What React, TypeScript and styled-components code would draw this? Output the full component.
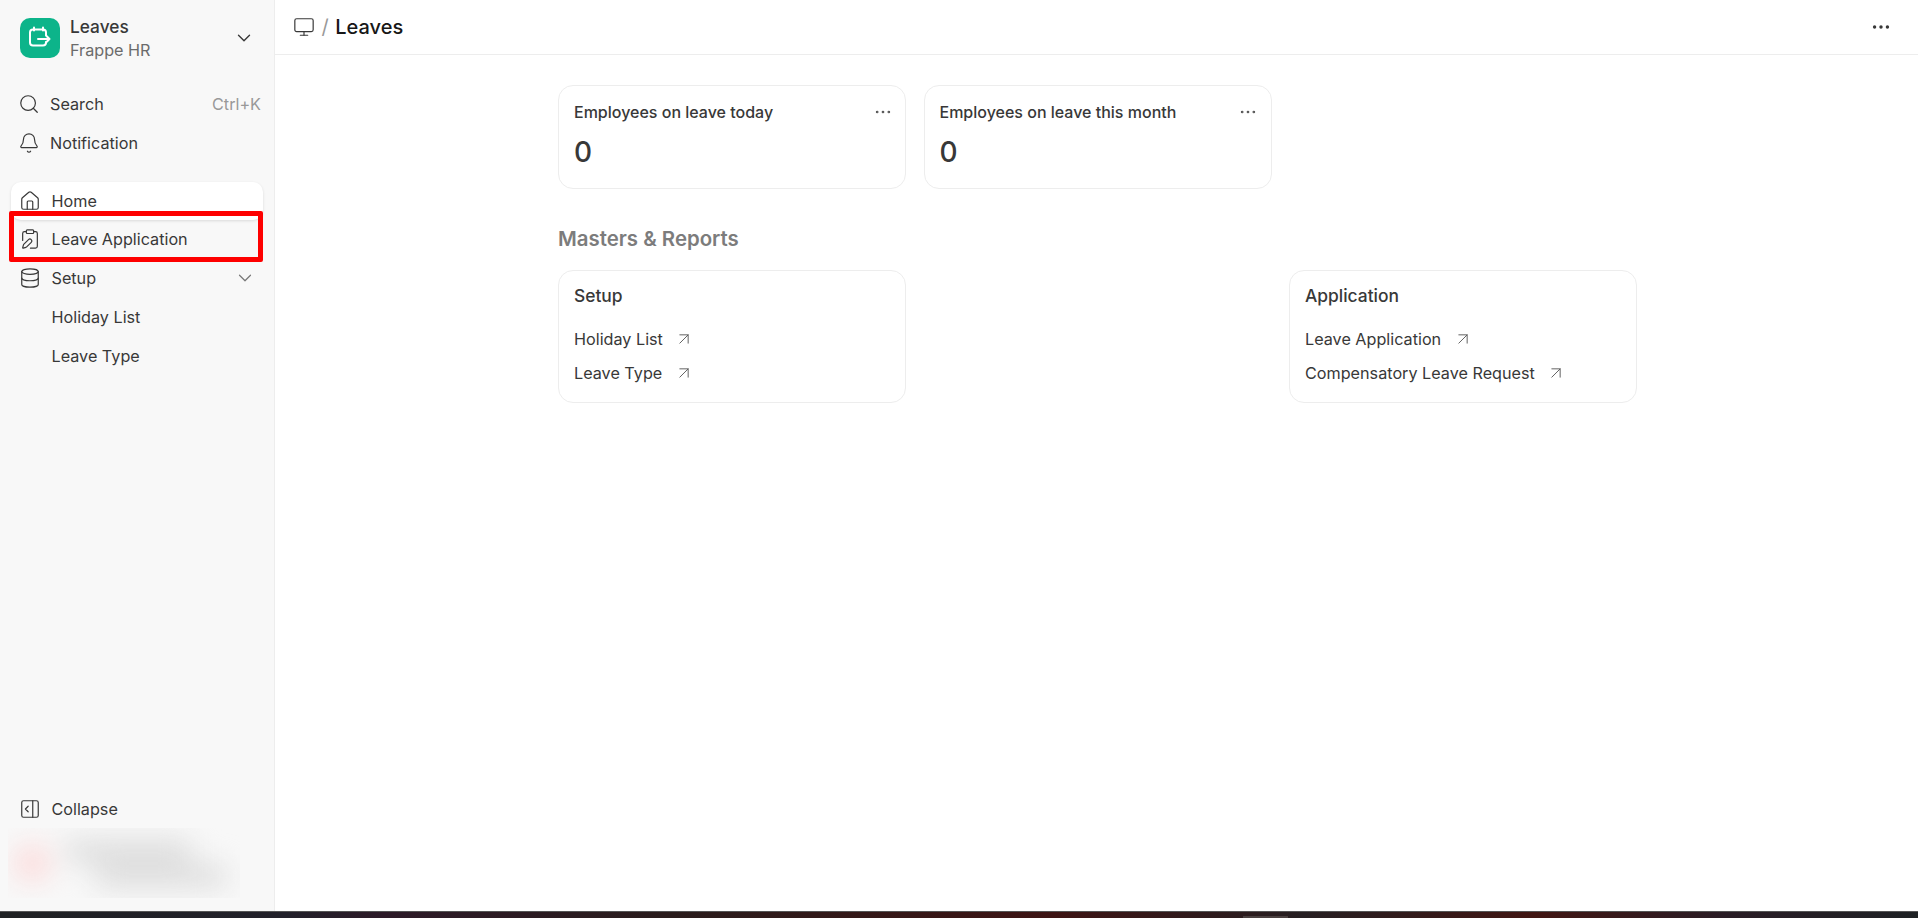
import React from "react";
import styled, { createGlobalStyle } from "styled-components";
import {
  ArrowUpRight,
  Bell,
  ChevronDown,
  ClipboardPen,
  Database,
  Ellipsis,
  House,
  Monitor,
  PanelRightOpen,
  Search,
} from "lucide-react";

const GlobalStyle = createGlobalStyle`
  html, body, #root {
    margin: 0;
    height: 100%;
  }
  body {
    font-family: Inter, "Liberation Sans", sans-serif;
    color: #383838;
    background: #fff;
    overflow: hidden;
  }
`;

const LogoIcon = () => (
  <svg width="24" height="24" viewBox="0 0 24 24" fill="none" stroke="#fff" strokeWidth="2" strokeLinecap="round" strokeLinejoin="round">
    <path d="M6 1.500v3M15 1.500v3" />
    <path d="M18 9V6.500a3 3 0 0 0-3-3H5a3 3 0 0 0-3 3v10a3 3 0 0 0 3 3h10a3 3 0 0 0 3-3v-.5" />
    <path d="M10 13h11.500M18 9.500l3.500 3.500-3.500 3.500" />
  </svg>
);

const setupLinks = ["Holiday List", "Leave Type"];
const applicationLinks = ["Leave Application", "Compensatory Leave Request"];

export default function App() {
  return (
    <>
      <GlobalStyle />
      <Page>
        <Body>
          <Sidebar>
            <Brand>
              <Logo>
                <LogoIcon />
              </Logo>
              <BrandText>
                <BrandTitle>Leaves</BrandTitle>
                <BrandSub>Frappe HR</BrandSub>
              </BrandText>
              <BrandChevron>
                <ChevronDown size={22} strokeWidth={1.5} />
              </BrandChevron>
            </Brand>

            <TopNav>
              <TopItem>
                <Search size={22} strokeWidth={1.3} />
                <span>Search</span>
                <Shortcut>Ctrl+K</Shortcut>
              </TopItem>
              <TopItem>
                <Bell size={22} strokeWidth={1.3} />
                <span>Notification</span>
              </TopItem>
            </TopNav>

            <Nav>
              <NavItem $active>
                <House size={22} strokeWidth={1.3} />
                <span>Home</span>
              </NavItem>
              <NavItem>
                <ClipboardPen size={22} strokeWidth={1.3} />
                <span>Leave Application</span>
                <Highlight />
              </NavItem>
              <NavItem>
                <Database size={22} strokeWidth={1.3} />
                <span>Setup</span>
                <NavChevron>
                  <ChevronDown size={22} strokeWidth={1.3} />
                </NavChevron>
              </NavItem>
              <SubItem>Holiday List</SubItem>
              <SubItem>Leave Type</SubItem>
            </Nav>

            <SidebarFooter>
              <NavItem>
                <PanelRightOpen size={22} strokeWidth={1.3} />
                <span>Collapse</span>
              </NavItem>
              <UserBlock>
                <UserBlur>
                  <UserAvatar />
                  <UserLines>
                    <UserLine $width={125} />
                    <UserLine $width={130} $indent={30} />
                  </UserLines>
                </UserBlur>
              </UserBlock>
            </SidebarFooter>
          </Sidebar>

          <Main>
            <Topbar>
              <Crumbs>
                <Monitor size={22} strokeWidth={1.3} />
                <Slash>/</Slash>
                <PageTitle>Leaves</PageTitle>
              </Crumbs>
              <Ellipsis size={22} strokeWidth={1.75} />
            </Topbar>

            <Content>
              <Grid>
                <StatCard>
                  <StatHead>
                    <StatLabel>Employees on leave today</StatLabel>
                    <Ellipsis size={20} strokeWidth={1.25} />
                  </StatHead>
                  <StatValue>0</StatValue>
                </StatCard>
                <StatCard>
                  <StatHead>
                    <StatLabel>Employees on leave this month</StatLabel>
                    <Ellipsis size={20} strokeWidth={1.25} />
                  </StatHead>
                  <StatValue>0</StatValue>
                </StatCard>
              </Grid>

              <SectionTitle>Masters &amp; Reports</SectionTitle>

              <Grid>
                <LinkCard>
                  <LinkTitle>Setup</LinkTitle>
                  <LinkList>
                    {setupLinks.map((label) => (
                      <LinkRow key={label}>
                        {label}
                        <ArrowUpRight size={20} strokeWidth={1.1} />
                      </LinkRow>
                    ))}
                  </LinkList>
                </LinkCard>
                <div />
                <LinkCard>
                  <LinkTitle>Application</LinkTitle>
                  <LinkList>
                    {applicationLinks.map((label) => (
                      <LinkRow key={label}>
                        {label}
                        <ArrowUpRight size={20} strokeWidth={1.1} />
                      </LinkRow>
                    ))}
                  </LinkList>
                </LinkCard>
              </Grid>
            </Content>
          </Main>
        </Body>
        <DesktopStrip>
          <TaskbarBump />
        </DesktopStrip>
      </Page>
    </>
  );
}

const Page = styled.div`
  height: 918px;
  display: flex;
  flex-direction: column;
`;

const Body = styled.div`
  flex: 1;
  min-height: 0;
  display: flex;
`;

const Sidebar = styled.aside`
  width: 275px;
  flex-shrink: 0;
  box-sizing: border-box;
  background: #f8f8f8;
  border-right: 1px solid #ededed;
  display: flex;
  flex-direction: column;
  overflow: hidden;
`;

const Brand = styled.div`
  display: flex;
  align-items: flex-start;
  padding: 18px 0 0 20px;
`;

const Logo = styled.div`
  width: 40px;
  height: 40px;
  border-radius: 10px;
  background: #0cb48a;
  display: flex;
  align-items: center;
  justify-content: center;
`;

const BrandText = styled.div`
  margin-left: 10px;
  display: flex;
  flex-direction: column;
  gap: 4px;
`;

const BrandTitle = styled.div`
  font-size: 17.300px;
  line-height: 18px;
  font-weight: 500;
  color: #383838;
`;

const BrandSub = styled.div`
  font-size: 16.200px;
  line-height: 20px;
  color: #6b6b6b;
`;

const BrandChevron = styled.div`
  margin: 9px 19px 0 auto;
  display: flex;
  color: #383838;
`;

const TopNav = styled.div`
  margin-top: 25px;
  display: flex;
  flex-direction: column;
`;

const TopItem = styled.div`
  height: 38.500px;
  display: flex;
  align-items: center;
  gap: 10px;
  padding: 0 13px 0 18px;
  font-size: 16.200px;
  color: #383838;
  svg {
    flex-shrink: 0;
  }
`;

const Shortcut = styled.span`
  margin-left: auto;
  color: #999;
`;

const Nav = styled.nav`
  margin: 20px 11px 0;
  display: flex;
  flex-direction: column;
`;

const NavItem = styled.div<{ $active?: boolean }>`
  position: relative;
  height: ${(p) => (p.$active ? 38 : 38.5)}px;
  flex-shrink: 0;
  display: flex;
  align-items: center;
  gap: 10.500px;
  padding: 0 8px;
  font-size: 16.200px;
  color: #383838;
  border-radius: 10px;
  background: ${(p) => (p.$active ? "#fff" : "transparent")};
  box-shadow: ${(p) => (p.$active ? "0 1px 3px rgba(0, 0, 0, 0.12)" : "none")};
  svg {
    flex-shrink: 0;
  }
`;

const Highlight = styled.div`
  position: absolute;
  inset: -9px 0 -3.500px -2px;
  border: 5px solid #fe0000;
  border-radius: 2px;
`;

const NavChevron = styled.div`
  margin-left: auto;
  margin-right: -1px;
  display: flex;
  color: #777;
`;

const SubItem = styled.div`
  height: 39px;
  display: flex;
  align-items: center;
  padding-left: 40.500px;
  font-size: 16.200px;
  color: #383838;
`;

const SidebarFooter = styled.div`
  margin-top: auto;
  padding: 0 11px 13px;
  display: flex;
  flex-direction: column;
`;

const UserBlock = styled.div`
  margin-left: -3px;
  width: 232px;
  height: 70px;
  overflow: hidden;
`;

const UserBlur = styled.div`
  height: 100%;
  display: flex;
  align-items: center;
  gap: 16px;
  padding-left: 6px;
  filter: blur(14px);
`;

const UserAvatar = styled.div`
  width: 36px;
  height: 36px;
  flex-shrink: 0;
  border-radius: 50%;
  background: #fcdada;
`;

const UserLines = styled.div`
  display: flex;
  flex-direction: column;
  gap: 3px;
`;

const UserLine = styled.div<{ $width: number; $indent?: number }>`
  width: ${(p) => p.$width}px;
  height: 22px;
  margin-left: ${(p) => p.$indent ?? 0}px;
  background: #dcdcdc;
`;

const Main = styled.main`
  flex: 1;
  min-width: 0;
  background: #fff;
  display: flex;
  flex-direction: column;
`;

const Topbar = styled.header`
  height: 55px;
  flex-shrink: 0;
  box-sizing: border-box;
  border-bottom: 1px solid #ededed;
  display: flex;
  align-items: center;
  justify-content: space-between;
  padding: 0 26px 0 18px;
  color: #383838;
`;

const Crumbs = styled.div`
  display: flex;
  align-items: center;
  gap: 6.500px;
`;

const Slash = styled.span`
  font-size: 20px;
  color: #999;
`;

const PageTitle = styled.h1`
  margin: 0;
  font-size: 20px;
  font-weight: 500;
  color: #171717;
`;

const Content = styled.div`
  width: 1079px;
  margin-left: 283px;
  padding-top: 30px;
  display: flex;
  flex-direction: column;
`;

const Grid = styled.div`
  display: grid;
  grid-template-columns: repeat(3, 348px);
  column-gap: 17.500px;
`;

const Card = styled.section`
  box-sizing: border-box;
  background: #fff;
  border: 1px solid #ededed;
  border-radius: 15px;
  padding: 0 15px;
`;

const StatCard = styled(Card)`
  height: 104px;
  padding-top: 16px;
`;

const StatHead = styled.div`
  display: flex;
  align-items: center;
  justify-content: space-between;
  height: 20px;
  margin-right: -2.500px;
  color: #525252;
`;

const StatLabel = styled.div`
  font-size: 16px;
  line-height: 20px;
  font-weight: 500;
  color: #383838;
`;

const StatValue = styled.div`
  margin-top: 13px;
  font-size: 28px;
  line-height: 34px;
  font-weight: 500;
  color: #383838;
`;

const SectionTitle = styled.h2`
  margin: 38px 0 20px;
  font-size: 20.400px;
  line-height: 23px;
  font-weight: 600;
  color: #7c7c7c;
`;

const LinkCard = styled(Card)`
  height: 133px;
  padding-top: 13px;
`;

const LinkTitle = styled.div`
  font-size: 17.400px;
  line-height: 24px;
  font-weight: 500;
  color: #383838;
`;

const LinkList = styled.div`
  margin-top: 17px;
  display: flex;
  flex-direction: column;
  gap: 6px;
`;

const LinkRow = styled.div`
  display: flex;
  align-items: center;
  gap: 11.500px;
  font-size: 16.200px;
  line-height: 28px;
  color: #383838;
  svg {
    color: #555;
  }
`;

const DesktopStrip = styled.div`
  position: relative;
  height: 7px;
  flex-shrink: 0;
  border-top: 1px solid #555;
  box-sizing: border-box;
  background: linear-gradient(90deg, #1f2123 0%, #22202a 15%, #2d1a28 20%, #2a1c1c 35%, #3e1414 55%, #261f22 68%, #421613 80%, #2a1d26 90%, #1e2124 100%);
`;

const TaskbarBump = styled.div`
  position: absolute;
  left: 1243px;
  bottom: 0;
  width: 45px;
  height: 2px;
  background: #4a4040;
`;
